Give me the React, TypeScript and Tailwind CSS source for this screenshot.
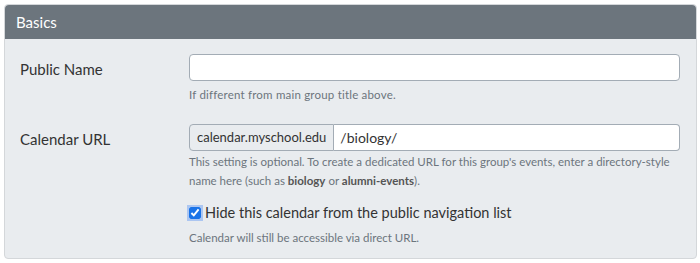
export default function App() {
    return (
        <div className="p-[4px] pr-[3px] font-['Lato','Noto_Sans',sans-serif]">
            <div className="rounded-[4px] border border-[#d4d7da] bg-[#e9ecef]">
                {/* Header */}
                <div className="h-[34px] rounded-t-[4px] bg-[#6c757d] px-[11px] flex items-center">
                    <h2 className="text-[15px] text-white">Basics</h2>
                </div>

                <div className="pt-[15px] pb-[12px]">
                    {/* Public Name */}
                    <div className="flex">
                        <label className="w-[184px] pl-[15px] pt-[4px] text-[15px] text-[#333]">Public Name</label>
                        <div className="flex-1 pr-[16px]">
                            <input
                                type="text"
                                className="block w-full h-[27px] rounded-[4px] border border-[#a3acb5] bg-white px-[8px] text-[14px] outline-none"
                            />
                            <p className="mt-[5px] text-[11.5px] tracking-[0.2px] text-[#6c757d]">If different from main group title above.</p>
                        </div>
                    </div>

                    {/* Calendar URL */}
                    <div className="flex mt-[21px]">
                        <label className="w-[184px] pl-[15px] pt-[4px] text-[15px] text-[#333]">Calendar URL</label>
                        <div className="flex-1 pr-[16px]">
                            <div className="flex h-[27px]">
                                <span className="flex items-center rounded-l-[4px] border border-[#a3acb5] bg-[#e9ecef] px-[7px] text-[13px] text-[#333]">
                                    calendar.myschool.edu
                                </span>
                                <input
                                    type="text"
                                    defaultValue="/biology/"
                                    className="flex-1 min-w-0 rounded-r-[4px] border border-l-0 border-[#a3acb5] bg-white px-[6px] text-[14px] text-[#333] outline-none"
                                />
                            </div>
                            <p className="mt-[1px] text-[11.5px] leading-[19px] text-[#6c757d]">
                                This setting is optional. To create a dedicated URL for this group's events, enter a directory-style name here (such as <b className="text-[#555]">biology</b> or <b className="text-[#555]">alumni-events</b>).
                            </p>

                            <label className="mt-[12px] flex items-center gap-[4px] text-[14.5px] text-[#333]">
                                <input type="checkbox" defaultChecked className="w-[12px] h-[12px] accent-[#1a73e8] shadow-[0_0_0_2px_rgba(59,130,246,0.35)]" />
                                Hide this calendar from the public navigation list
                            </label>
                            <p className="mt-[5px] text-[11.5px] text-[#6c757d]">Calendar will still be accessible via direct URL.</p>
                        </div>
                    </div>
                </div>
            </div>
        </div>
    );
}
